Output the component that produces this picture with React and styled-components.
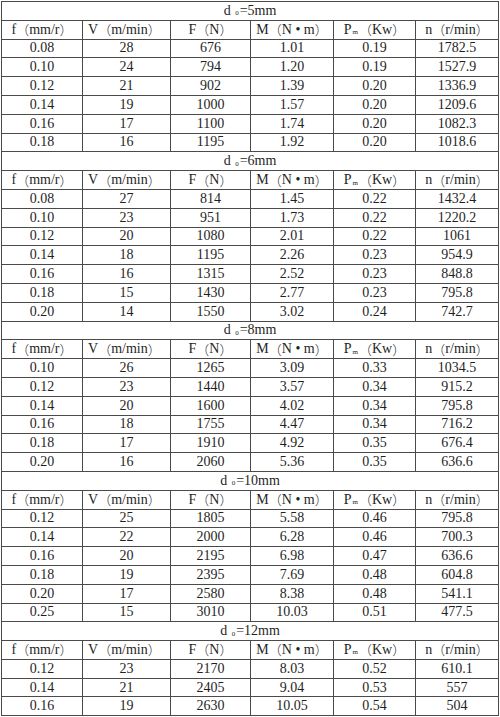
import styled, { createGlobalStyle } from "styled-components";

const GlobalStyle = createGlobalStyle`
  html, body {
    margin: 0;
    padding: 0;
    background: #fff;
  }
  body {
    font-family: "Liberation Serif", "Noto Sans CJK SC", serif;
    color: #1f1f1f;
  }
`;

const Board = styled.div`
  margin: 1px 0 0 1px;
  width: 498px;
  border-left: 1px solid #4a4a4a;
  border-top: 1px solid #4a4a4a;
  box-sizing: border-box;
  font-size: 14px;
`;

const Row = styled.div`
  display: grid;
  grid-template-columns: 81px 88px 80px 83px 82px 1fr;
  height: 18.8px;
`;

const Cell = styled.div`
  display: flex;
  align-items: center;
  justify-content: ${(p) => (p.$left ? "flex-start" : "center")};
  padding-left: ${(p) => (p.$left ? "5px" : "0")};
  box-sizing: border-box;
  border-right: 1px solid #4a4a4a;
  border-bottom: 1px solid #4a4a4a;
  line-height: 1;
  white-space: nowrap;
  overflow: hidden;
`;

const TitleCell = styled(Cell)`
  grid-column: 1 / -1;
`;

const Paren = styled.span`
  font-family: "Noto Sans CJK SC", sans-serif;
  font-size: 13px;
  font-weight: 300;
`;

const Sub = styled.span`
  font-size: 7px;
  position: relative;
  top: 3px;
  margin: 0 1px;
`;

const sections = [
  {
    d: 5,
    rows: [
      ["0.08", "28", "676", "1.01", "0.19", "1782.5"],
      ["0.10", "24", "794", "1.20", "0.19", "1527.9"],
      ["0.12", "21", "902", "1.39", "0.20", "1336.9"],
      ["0.14", "19", "1000", "1.57", "0.20", "1209.6"],
      ["0.16", "17", "1100", "1.74", "0.20", "1082.3"],
      ["0.18", "16", "1195", "1.92", "0.20", "1018.6"],
    ],
  },
  {
    d: 6,
    rows: [
      ["0.08", "27", "814", "1.45", "0.22", "1432.4"],
      ["0.10", "23", "951", "1.73", "0.22", "1220.2"],
      ["0.12", "20", "1080", "2.01", "0.22", "1061"],
      ["0.14", "18", "1195", "2.26", "0.23", "954.9"],
      ["0.16", "16", "1315", "2.52", "0.23", "848.8"],
      ["0.18", "15", "1430", "2.77", "0.23", "795.8"],
      ["0.20", "14", "1550", "3.02", "0.24", "742.7"],
    ],
  },
  {
    d: 8,
    rows: [
      ["0.10", "26", "1265", "3.09", "0.33", "1034.5"],
      ["0.12", "23", "1440", "3.57", "0.34", "915.2"],
      ["0.14", "20", "1600", "4.02", "0.34", "795.8"],
      ["0.16", "18", "1755", "4.47", "0.34", "716.2"],
      ["0.18", "17", "1910", "4.92", "0.35", "676.4"],
      ["0.20", "16", "2060", "5.36", "0.35", "636.6"],
    ],
  },
  {
    d: 10,
    rows: [
      ["0.12", "25", "1805", "5.58", "0.46", "795.8"],
      ["0.14", "22", "2000", "6.28", "0.46", "700.3"],
      ["0.16", "20", "2195", "6.98", "0.47", "636.6"],
      ["0.18", "19", "2395", "7.69", "0.48", "604.8"],
      ["0.20", "17", "2580", "8.38", "0.48", "541.1"],
      ["0.25", "15", "3010", "10.03", "0.51", "477.5"],
    ],
  },
  {
    d: 12,
    rows: [
      ["0.12", "23", "2170", "8.03", "0.52", "610.1"],
      ["0.14", "21", "2405", "9.04", "0.53", "557"],
      ["0.16", "19", "2630", "10.05", "0.54", "504"],
    ],
  },
];

function HeaderRow() {
  return (
    <Row>
      <Cell>
        f<Paren>（</Paren>mm/r<Paren>）</Paren>
      </Cell>
      <Cell $left>
        V<Paren>（</Paren>m/min<Paren>）</Paren>
      </Cell>
      <Cell>
        F<Paren>（</Paren>N<Paren>）</Paren>
      </Cell>
      <Cell>
        M<Paren>（</Paren>N • m<Paren>）</Paren>
      </Cell>
      <Cell>
        P<Sub>m</Sub>
        <Paren>（</Paren>Kw<Paren>）</Paren>
      </Cell>
      <Cell>
        n<Paren>（</Paren>r/min<Paren>）</Paren>
      </Cell>
    </Row>
  );
}

function Section({ d, rows }) {
  return (
    <>
      <Row>
        <TitleCell>
          d&nbsp;<Sub>0</Sub>={d}mm
        </TitleCell>
      </Row>
      <HeaderRow />
      {rows.map((r, i) => (
        <Row key={i}>
          {r.map((v, j) => (
            <Cell key={j}>{v}</Cell>
          ))}
        </Row>
      ))}
    </>
  );
}

export default function App() {
  return (
    <>
      <GlobalStyle />
      <Board>
        {sections.map((s) => (
          <Section key={s.d} d={s.d} rows={s.rows} />
        ))}
      </Board>
    </>
  );
}
